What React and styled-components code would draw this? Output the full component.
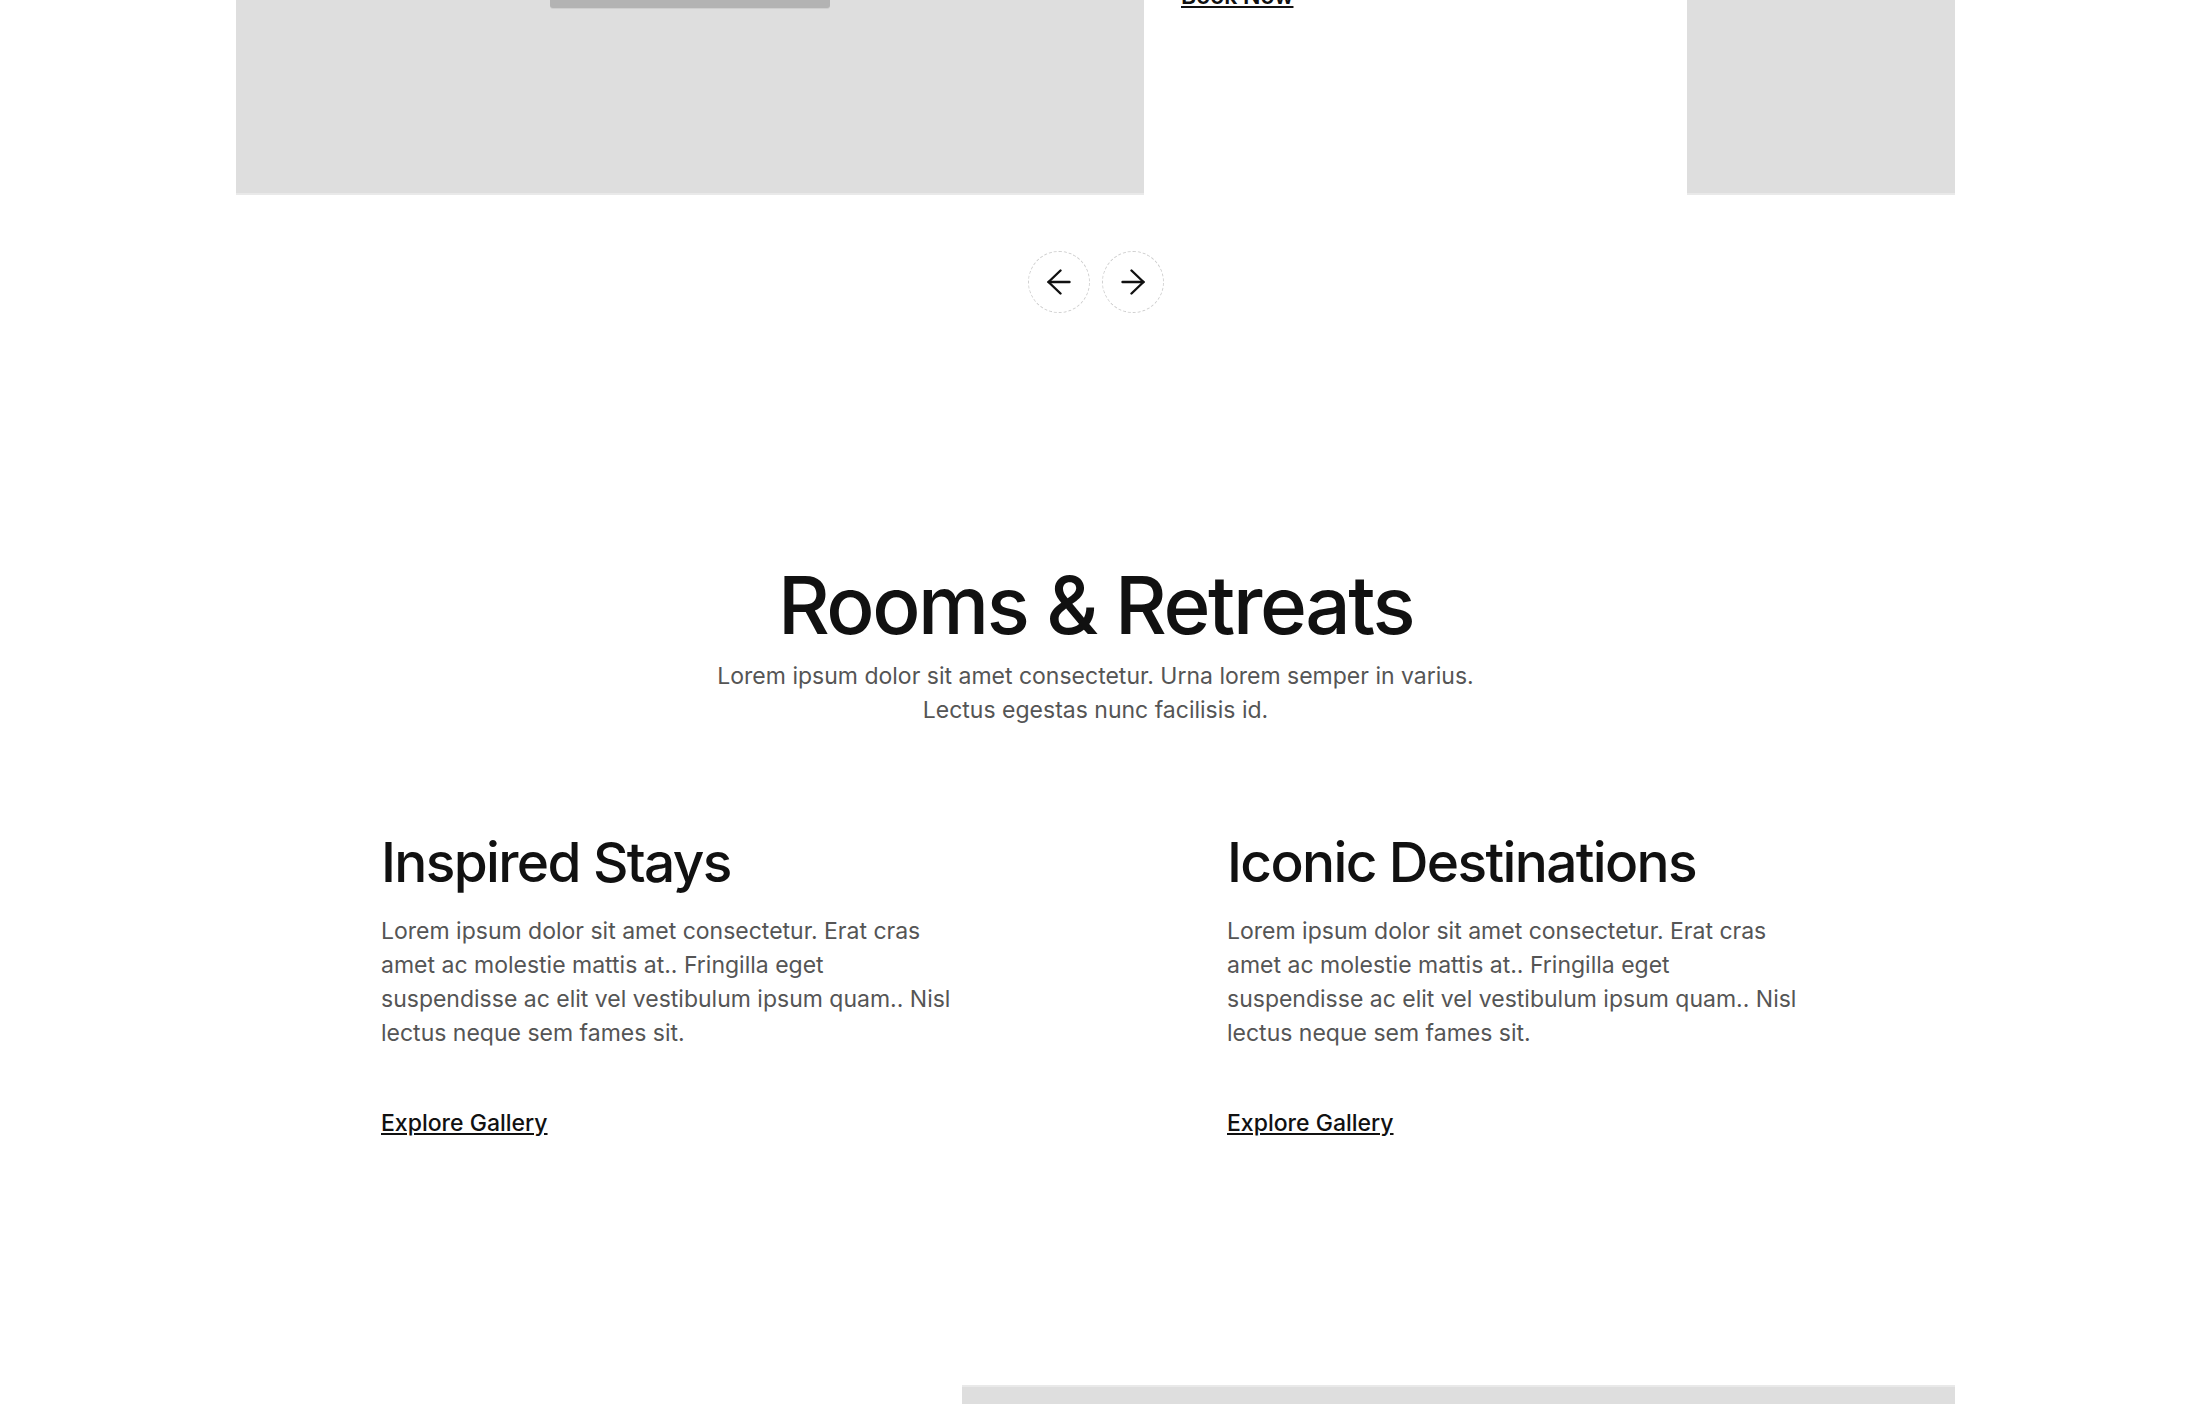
import styled, { createGlobalStyle } from "styled-components";

const GlobalStyle = createGlobalStyle`
  html, body {
    margin: 0;
    padding: 0;
    background: #ffffff;
  }
  body {
    font-family: Inter, "Noto Sans", "Liberation Sans", sans-serif;
    color: #111111;
    overflow: hidden;
  }
`;

const Page = styled.div`
  width: 1719px;
  margin-left: 236px;
  height: 1404px;
  overflow: hidden;
`;

// Carrousel du haut (déjà défilé, on n'en voit que le bas)
const SlideTrack = styled.div`
  display: flex;
  gap: 37px;
  height: 195px;
  overflow: hidden;
`;

const ImagePanel = styled.div`
  flex: 0 0 908px;
  background: #dedede;
  border-bottom: 2px solid #e9e9e9;
  display: flex;
  justify-content: center;
  align-items: flex-start;
`;

const CaptionBar = styled.div`
  width: 280px;
  height: 8px;
  background: #b3b3b3;
  border-radius: 0 0 3px 3px;
  box-shadow: 0 1px 0 #cfcfcf;
`;

const SlideText = styled.div`
  flex: 1;
`;

const ClippedLink = styled.a`
  display: block;
  margin-top: -17px;
  font-size: 23px;
  line-height: 26px;
  font-weight: 600;
  color: #111;
  text-decoration: underline;
`;

const PeekPanel = styled.div`
  flex: 0 0 268px;
  background: #dedede;
  border-bottom: 2px solid #e9e9e9;
`;

const Controls = styled.div`
  display: flex;
  justify-content: center;
  gap: 12px;
  margin-top: 56px;
`;

const RoundButton = styled.button`
  width: 62px;
  height: 62px;
  border-radius: 50%;
  border: 1px dashed #cfcfcf;
  background: #fff;
  display: flex;
  align-items: center;
  justify-content: center;
  padding: 0;
  color: #111;
  cursor: pointer;

  svg {
    transform: ${(p) => (p.$flip ? "scaleX(-1)" : "none")};
  }
`;

const RoomsSection = styled.section`
  display: flex;
  flex-direction: column;
  align-items: center;
  margin-top: 244px;
`;

const SectionTitle = styled.h2`
  margin: 0;
  font-size: 80px;
  line-height: 96px;
  font-weight: 500;
  letter-spacing: -0.03em;
  color: #111;
`;

const SectionLead = styled.p`
  margin: 6px 0 0;
  max-width: 800px;
  text-align: center;
  font-size: 23px;
  line-height: 34px;
  color: #555;
`;

const CardGrid = styled.div`
  align-self: stretch;
  display: grid;
  grid-template-columns: 583px 583px;
  justify-content: center;
  column-gap: 263px;
  margin-top: 103px;
`;

const Card = styled.article`
  display: flex;
  flex-direction: column;
  align-items: flex-start;
`;

const CardTitle = styled.h3`
  margin: 0;
  font-size: 55px;
  line-height: 64px;
  font-weight: 500;
  letter-spacing: -0.03em;
  color: #111;
`;

const CardText = styled.p`
  margin: 20px 0 0;
  font-size: 23px;
  line-height: 34px;
  color: #555;
`;

const CardLink = styled.a`
  margin-top: 61px;
  font-size: 23px;
  line-height: 24px;
  font-weight: 500;
  color: #111;
  text-decoration: underline;
`;

const BottomRow = styled.div`
  display: flex;
  justify-content: flex-end;
  margin-top: 250px;
`;

const GrayBlock = styled.div`
  width: 993px;
  height: 400px;
  background: #dedede;
  border-top: 2px solid #e9e9e9;
`;

const Arrow = () => (
  <svg width="24" height="26" viewBox="0 0 24 26" fill="none" stroke="currentColor" strokeWidth="2.4" strokeLinecap="round" strokeLinejoin="round">
    <path d="M22.5 13H1.5" />
    <path d="M13.5 1.5L1.5 13l12 11.5" />
  </svg>
);

const cards = [
  {
    title: "Inspired Stays",
    text: "Lorem ipsum dolor sit amet consectetur. Erat cras amet ac molestie mattis at.. Fringilla eget suspendisse ac elit vel vestibulum ipsum quam.. Nisl lectus neque sem fames sit.",
  },
  {
    title: "Iconic Destinations",
    text: "Lorem ipsum dolor sit amet consectetur. Erat cras amet ac molestie mattis at.. Fringilla eget suspendisse ac elit vel vestibulum ipsum quam.. Nisl lectus neque sem fames sit.",
  },
];

export default function App() {
  return (
    <>
      <GlobalStyle />
      <Page>
        <SlideTrack>
          <ImagePanel>
            <CaptionBar />
          </ImagePanel>
          <SlideText>
            <ClippedLink href="#">Book Now</ClippedLink>
          </SlideText>
          <PeekPanel />
        </SlideTrack>

        <Controls>
          <RoundButton aria-label="Previous">
            <Arrow />
          </RoundButton>
          <RoundButton aria-label="Next" $flip>
            <Arrow />
          </RoundButton>
        </Controls>

        <RoomsSection>
          <SectionTitle>Rooms &amp; Retreats</SectionTitle>
          <SectionLead>
            Lorem ipsum dolor sit amet consectetur. Urna lorem semper in varius.
            Lectus egestas nunc facilisis id.
          </SectionLead>

          <CardGrid>
            {cards.map((card) => (
              <Card key={card.title}>
                <CardTitle>{card.title}</CardTitle>
                <CardText>{card.text}</CardText>
                <CardLink href="#">Explore Gallery</CardLink>
              </Card>
            ))}
          </CardGrid>
        </RoomsSection>

        <BottomRow>
          <GrayBlock />
        </BottomRow>
      </Page>
    </>
  );
}
